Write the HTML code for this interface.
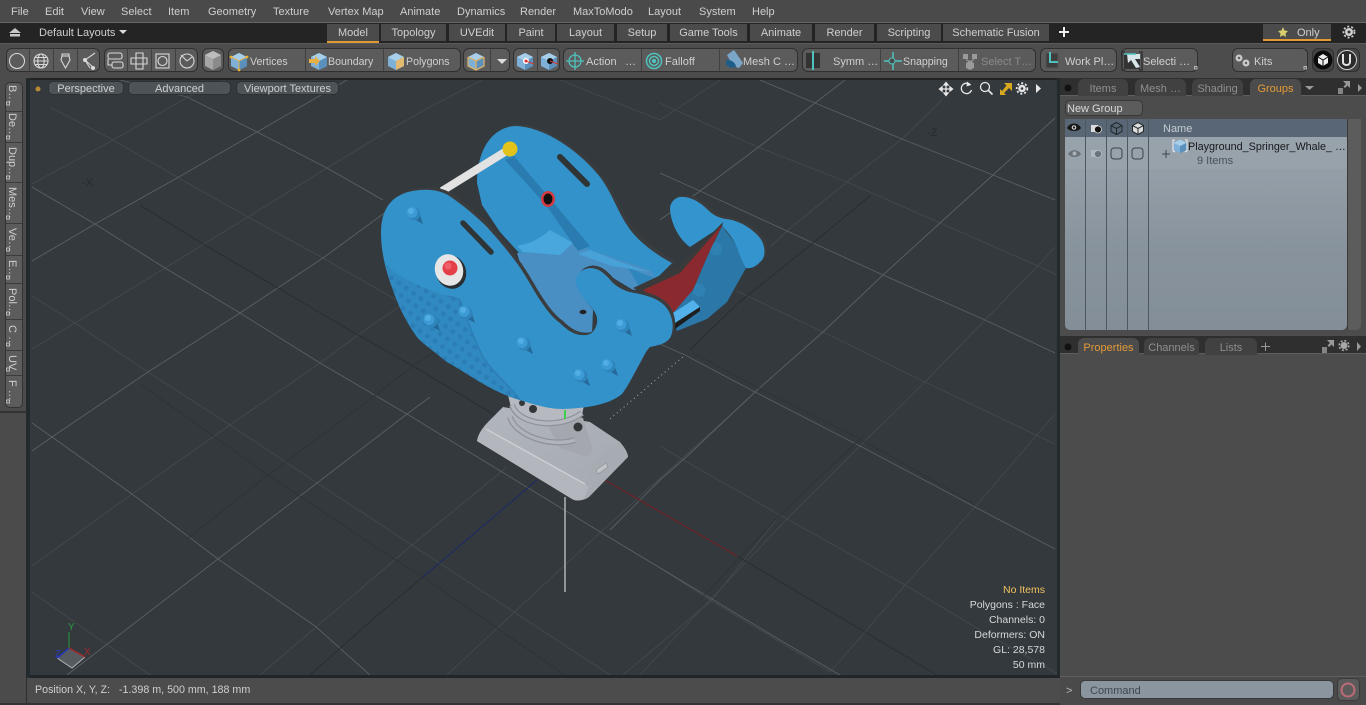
<!DOCTYPE html>
<html><head><meta charset="utf-8"><title>Modo</title>
<style>
html,body{margin:0;padding:0;background:#4a4a4a;}
body{width:1366px;height:705px;overflow:hidden;position:relative;font-family:"Liberation Sans",sans-serif;font-size:11px;color:#cfcfcf;}
.r{position:absolute;box-sizing:border-box;}
.t{position:absolute;white-space:nowrap;line-height:14px;height:14px;margin-top:1px;}
.tab{position:absolute;top:24px;height:17px;background:#4b4b4b;text-align:center;line-height:18px;color:#cfcfcf;}
.grp{position:absolute;top:48px;height:24px;background:#5b5b5b;border:1px solid #303030;border-radius:6px;box-sizing:border-box;}
.v{position:absolute;left:5px;width:14px;writing-mode:vertical-rl;line-height:14px;white-space:nowrap;color:#d0d0d0;}
.vp{position:absolute;height:14px;line-height:14px;background:#4d5356;border:1px solid #2b3033;border-radius:5px;box-sizing:border-box;text-align:center;color:#cdd0d2;top:81px;}
.h{position:absolute;right:321px;line-height:14px;height:14px;white-space:nowrap;color:#d6d9db;font-size:10.5px;margin-top:1px;}
.pt{position:absolute;height:17px;background:#414141;border-radius:6px 6px 0 0;text-align:center;line-height:20px;color:#8f8f8f;}
</style></head><body>

<!-- panels -->
<div class="r" style="left:0;top:0;width:1366px;height:22px;background:#4a4a4a"></div>
<div class="r" style="left:0;top:22px;width:1366px;height:21px;background:#242424;border-top:1px solid #666"></div>
<div class="r" style="left:0;top:43px;width:1366px;height:35px;background:#4c4c4c;border-top:1px solid #5a5a5a"></div>
<div class="r" style="left:0;top:78px;width:1060px;height:2px;background:#222"></div>
<div class="r" style="left:0;top:78px;width:26px;height:627px;background:#4b4b4b"></div>
<div class="r" style="left:26px;top:78px;width:4px;height:600px;background:#232a2d"></div>
<div class="r" style="left:1057px;top:78px;width:3px;height:600px;background:#232a2d"></div>
<div class="r" style="left:30px;top:675px;width:1030px;height:3px;background:#1f2528"></div>
<div class="r" style="left:26px;top:678px;width:1034px;height:25px;background:#4c4c4c;border-left:1px solid #2e2e2e"></div>
<div class="r" style="left:0;top:703px;width:1060px;height:2px;background:#333"></div>

<!-- left tool strip -->
<div class="r" style="left:5px;top:82px;width:18px;height:326px;background:#5c5c5c;border:1px solid #333;border-radius:5px"></div>
<div class="r" style="left:0;top:411px;width:26px;height:2px;background:#333"></div>

<!-- tabs row -->
<div class="tab" style="left:327px;width:52px;border-bottom:2px solid #e09a32;height:17px">Model</div>
<div class="tab" style="left:381px;width:65px">Topology</div>
<div class="tab" style="left:449px;width:56px">UVEdit</div>
<div class="tab" style="left:507px;width:48px">Paint</div>
<div class="tab" style="left:557px;width:57px">Layout</div>
<div class="tab" style="left:617px;width:50px">Setup</div>
<div class="tab" style="left:670px;width:77px">Game Tools</div>
<div class="tab" style="left:750px;width:62px">Animate</div>
<div class="tab" style="left:815px;width:59px">Render</div>
<div class="tab" style="left:877px;width:64px">Scripting</div>
<div class="tab" style="left:943px;width:106px">Schematic Fusion</div>
<div class="tab" style="left:1263px;width:68px;border-bottom:2px solid #e09a32;box-sizing:border-box;text-align:left;padding-left:34px">Only</div>

<!-- toolbar groups -->
<div class="grp" style="left:6px;width:94px"></div>
<div class="grp" style="left:104px;width:94px"></div>
<div class="grp" style="left:202px;width:22px"></div>
<div class="grp" style="left:228px;width:233px"></div>
<div class="grp" style="left:463px;width:47px"></div>
<div class="grp" style="left:513px;width:47px"></div>
<div class="grp" style="left:563px;width:235px"></div>
<div class="grp" style="left:802px;width:234px"></div>
<div class="grp" style="left:1040px;width:77px"></div>
<div class="grp" style="left:1121px;width:77px"></div>
<div class="grp" style="left:1232px;width:76px"></div>
<div class="grp" style="left:1312px;width:22px;background:#444"></div>
<div class="grp" style="left:1337px;width:23px;background:#444"></div>

<!-- right panels -->
<div class="r" style="left:1060px;top:78px;width:306px;height:18px;background:#2f2f2f"></div>
<div class="r" style="left:1060px;top:95px;width:306px;height:241px;background:#4c4c4c;border-top:1px solid #5e5e5e"></div>
<div class="pt" style="left:1078px;top:79px;width:50px;">Items</div>
<div class="pt" style="left:1135px;top:79px;width:51px;">Mesh …</div>
<div class="pt" style="left:1192px;top:79px;width:51px;">Shading</div>
<div class="pt" style="left:1250px;top:79px;width:51px;background:#4c4c4c;color:#e59a35;">Groups</div>
<div class="r" style="left:1065px;top:100px;width:78px;height:16px;background:#5c5c5c;border:1px solid #383838;border-radius:5px"></div>
<div class="r" style="left:1065px;top:119px;width:282px;height:211px;background:linear-gradient(#9ca6ae,#88939d 60%,#838e98);border-radius:0 0 5px 5px"></div>
<div class="r" style="left:1065px;top:119px;width:282px;height:18px;background:#596675"></div>
<div class="r" style="left:1065px;top:137px;width:282px;height:32px;background:#98a2aa"></div>
<div class="r" style="left:1347px;top:119px;width:14px;height:211px;background:#5c5c5c;border-radius:0 0 5px 0;border-left:1px solid #3a3a3a"></div>
<div class="r" style="left:1085px;top:119px;width:1px;height:211px;background:#4e5860"></div>
<div class="r" style="left:1106px;top:119px;width:1px;height:211px;background:#4e5860"></div>
<div class="r" style="left:1127px;top:119px;width:1px;height:211px;background:#4e5860"></div>
<div class="r" style="left:1148px;top:119px;width:1px;height:211px;background:#4e5860"></div>

<div class="r" style="left:1060px;top:336px;width:306px;height:18px;background:#2f2f2f"></div>
<div class="r" style="left:1060px;top:353px;width:306px;height:323px;background:#4c4c4c;border-top:1px solid #5e5e5e"></div>
<div class="pt" style="left:1078px;top:338px;width:61px;background:#4c4c4c;color:#e59a35;">Properties</div>
<div class="pt" style="left:1144px;top:338px;width:55px;">Channels</div>
<div class="pt" style="left:1205px;top:338px;width:52px;">Lists</div>

<div class="r" style="left:1060px;top:676px;width:306px;height:29px;background:#4a4a4a;border-top:1px solid #5e5e5e"></div>
<div class="r" style="left:1080px;top:680px;width:254px;height:19px;background:#8a95a0;border:1px solid #3a3a3a;border-radius:5px"></div>
<div class="r" style="left:1337px;top:678px;width:23px;height:23px;background:#5b5b5b;border:1px solid #3a3a3a;border-radius:5px"></div>

<!-- main art -->
<svg width="1366" height="705" viewBox="0 0 1366 705" style="position:absolute;left:0;top:0" xmlns="http://www.w3.org/2000/svg">
<defs>
<clipPath id="vpc"><rect x="30" y="80" width="1027" height="595"/></clipPath>
<pattern id="belly" width="9" height="9" patternUnits="userSpaceOnUse" patternTransform="rotate(35)">
<rect width="9" height="9" fill="#3189c1"/>
<circle cx="3" cy="3" r="2.400" fill="#2b7eb4"/>
</pattern>
<linearGradient id="baseg" x1="0" y1="0" x2="1" y2="1"><stop offset="0" stop-color="#b2b6bd"/><stop offset="1" stop-color="#a4a8b0"/></linearGradient>
<g id="b">
<path d="M1 6 L10 11 L7 2 Z" fill="#24699a"/>
<circle cx="1" cy="1" r="6.500" fill="#2f85bb"/>
<circle cx="-1" cy="-0.500" r="5.500" fill="#3c9bd5"/>
<circle cx="-2" cy="-2" r="3" fill="#52ade2"/>
</g>
<g id="cube">
<path d="M0 -8 L8 -4 L8 5 L0 9 L-8 5 L-8 -4 Z" fill="#7fb1d8"/>
<path d="M0 0 L8 -4 L8 5 L0 9 Z" fill="#5a90bb"/>
<path d="M0 -8 L8 -4 L0 0 L-8 -4 Z" fill="#a8cfe9"/>
</g>
<g id="cubeo">
<use href="#cube"/>
<path d="M-8 -4 L0 0 L8 -4 M0 0 L0 9" stroke="#e2b04a" stroke-width="1" fill="none"/>
<circle cx="-8" cy="-4" r="1.400" fill="#f0b030"/><circle cx="8" cy="-4" r="1.400" fill="#f0b030"/><circle cx="0" cy="9" r="1.400" fill="#f0b030"/>
</g>
</defs>

<rect x="30" y="80" width="1027" height="595" fill="#33393d"/>
<g clip-path="url(#vpc)" fill="none">
<!-- dim grid -->
<g stroke="#424a4d" stroke-width=".9">
<polyline points="50,107 113,140 177,177 248,217 323,258 400,302"/>
<polyline points="32,296 75,323 148,372 230,425 317,483 412,545 610,675"/>
<polyline points="32,592 150,675"/>
<polyline points="32,184 113,140 188,97 225,80"/>
<polyline points="32,349 75,323 165,268 248,217 327,168 398,125 430,107 520,60"/>
<polyline points="32,566 132,494 230,425 320,363 358,335 430,285"/>
<polyline points="260,675 412,545 507,467"/>
<polyline points="660,103 760,148 847,182 940,223 1038,266 1057,275"/>
<polyline points="737,291 823,332 925,382 1055,444"/>
<polyline points="660,446 685,461 780,515 905,585 980,630 1060,675"/>
<polyline points="660,568 710,600 830,672"/>
<polyline points="660,120 720,80"/>
<polyline points="943,99 902,139 847,182 788,230 770,247"/>
<polyline points="1055,247 1038,266 985,320 925,382 860,446 788,518 710,600 640,675"/>
<polyline points="1055,414 975,507 905,585 865,632 830,672"/>
<polyline points="447,675 565,565 638,498 747,400"/>
<polyline points="623,675 712,600 780,515"/>
<polyline points="560,80 660,120"/>
</g>
<!-- bright grid -->
<g stroke="#596164" stroke-width=".9">
<polyline points="187,97 257,132 327,168 383,200"/>
<polyline points="120,80 187,97"/>
<polyline points="32,187 95,224 165,268 240,313 320,363 407,414 602,533 780,640 840,675"/>
<polyline points="32,423 52,437 132,494 218,559 315,626 370,675"/>
<polyline points="32,261 95,224 177,178 257,132 347,80"/>
<polyline points="32,451 52,437 148,372 240,313 323,258 390,209"/>
<polyline points="67,675 218,559 317,483 407,414 430,397"/>
<polyline points="760,80 815,103 902,139 993,175 1055,200"/>
<polyline points="660,173 700,191 813,243 883,275 985,320 1055,353"/>
<polyline points="660,344 685,355 755,392 860,446 975,507 1055,549"/>
<polyline points="845,80 815,103 760,146 700,191 660,220"/>
<polyline points="1055,118 993,175 940,223 883,275 823,332 755,392 683,460 660,480 610,530"/>
</g>
<!-- dark grid -->
<g stroke="#272d30" stroke-width=".9">
<polyline points="140,205 203,244 278,288 358,335 413,366 600,478"/>
<polyline points="737,556 865,632 937,675"/>
<polyline points="423,577 380,613 310,675"/>
<polyline points="870,196 813,243 737,304 690,350"/>
</g>
<g stroke="#2d3336" stroke-width=".9">
<polyline points="187,539 268,475 373,397 413,366 440,348"/>
<polyline points="140,384 268,475 380,550 423,577 497,628 565,675"/>
<polyline points="693,353 760,389 860,439 973,503"/>
<polyline points="860,439 780,515 700,600"/>
</g>
<!-- axes -->
<polyline points="537,480 423,577" stroke="#1c2a66" stroke-width="1"/>
<polyline points="603,479 737,556" stroke="#6e2226" stroke-width="1.200"/>
<polyline points="610,419 685,355" stroke="#c8ccce" stroke-width=".8" stroke-dasharray="1 3.500"/>
<line x1="565" y1="497" x2="565" y2="592" stroke="#cfd3d5" stroke-width="1.200"/>

<!-- far side lower body -->
<path d="M722 226 L735 243 L746 268 L737 284 L727 302 L707 319 L677 331 L670 313 L693 290 L707 257 Z" fill="#2a77a8"/>
<circle cx="716" cy="249" r="6.500" fill="#2f80b3"/><circle cx="699" cy="290" r="6.500" fill="#2f80b3"/>
<!-- tail lobes -->
<path d="M670 209 C670 203 674 198 680 197 C690 196 700 202 708 210 C714 216 720 218 726 219 C738 220 752 228 760 238 C766 246 766 258 760 262 C756 267 750 269 746 268 C742 262 739 252 735 243 C731 236 726 230 722 226 L690 247 C680 240 671 225 670 209 Z" fill="#3a3c3e" transform="translate(2.500,-2)"/>
<path d="M670 209 C670 203 674 198 680 197 C690 196 700 202 708 210 C714 216 720 218 726 219 C738 220 752 228 760 238 C766 246 766 258 760 262 C756 267 750 269 746 268 C742 262 739 252 735 243 C731 236 726 230 722 226 L690 247 C680 240 671 225 670 209 Z" fill="#3494cd"/>

<!-- back plate -->
<path d="M479 183 C480 150 495 124 519 124 C548 126 582 150 604 178 C615 195 622 212 631 224 C640 238 660 252 676 262 L650 282 L520 252 L482 205 Z" fill="#3a3d3f"/>
<path d="M477 183 C477 150 492 126 517 126 C547 128 580 152 600 177 C612 193 618 212 627 225 C636 240 655 254 672 263 L653 282 L640 285 L600 262 L520 254 L500 232 L482 205 Z" fill="#3392c9"/>
<!-- seat -->
<path d="M517 253 L560 250 L573 243 L590 250 L650 270 L660 285 L633 290 L600 270 L576 282 L580 293 L593 310 L592 335 L580 335 L560 323 L540 300 L523 273 Z" fill="#4a8fc3"/>
<path d="M517 246 C525 244 535 243 550 230 L573 243 L560 255 L523 252 Z" fill="#4aa7de"/>
<path d="M578 254 L590 250 L620 262 L650 272 L612 266 Z" fill="#48a2d8"/>
<path d="M628 268 L665 282 L640 288 Z" fill="#2e86bd"/>
<!-- shadow stripe and slot -->
<path d="M514 156 L590 246 L578 251 L546 205 L505 160 Z" fill="#2a7cb0"/>
<line x1="560" y1="157" x2="587" y2="184" stroke="#2f3437" stroke-width="6" stroke-linecap="round"/>
<ellipse cx="548" cy="199" rx="7" ry="8" fill="#d43a40"/>
<ellipse cx="548" cy="199" rx="4.500" ry="5.500" fill="#111"/>
<!-- rod -->
<line x1="442" y1="191" x2="508" y2="150" stroke="#e2e2e2" stroke-width="8"/>
<circle cx="510" cy="149" r="7.500" fill="#e3c219"/>
<!-- mouth -->
<path d="M723 222 L680 266 L633 288 L643 292 L680 273 L722 227 Z" fill="#3a3a3a"/>
<path d="M722 225 L707 257 L693 290 L673 313 L643 290 L680 273 Z" fill="#8a2a2e"/>
<path d="M673 313 L693 300 L700 307 L675 323 Z" fill="#52b0ea"/>
<path d="M675 323 L700 307 L700 311 L675 329 Z" fill="#1e1e1e"/>

<!-- base -->
<path d="M477 441 C478 434 482 428 490 420 L503 407 L590 422 L620 442 C625 448 628 453 628 457 L590 496 C586 500 578 502 572 499 Z" fill="url(#baseg)"/>
<path d="M477 441 C478 436 481 431 485 428 L588 486 C588 490 586 495 583 499 C579 501 575 501 572 499 Z" fill="#b3b7bd"/>
<path d="M486 429 L585 484" stroke="#cbced3" stroke-width="1.500"/>
<path d="M586 486 L628 457 C625 452 622 446 620 442 L596 458 C592 466 590 476 586 486 Z" fill="#a7abb2"/>
<path d="M596 470 L606 463 L608 467 L598 474 Z" fill="#c0c4c9" stroke="#8d9198" stroke-width=".7"/>
<path d="M550 430 L560 448 L587 457 L593 450 L583 418 L540 405 Z" fill="#a4a8ae"/>
<path d="M508 395 L512 412 L548 425 L582 415 L586 395 Z" fill="#b6bac0"/>
<path d="M510 417 C515 435 550 448 575 440" stroke="#8e9299" stroke-width="6"/>
<path d="M510 417 C515 435 550 448 575 440" stroke="#b0b4ba" stroke-width="3.500"/>
<path d="M512 405 C518 425 560 430 582 413" stroke="#8e9299" stroke-width="6"/>
<path d="M512 405 C518 425 560 430 582 413" stroke="#b4b8be" stroke-width="3.500"/>
<circle cx="533" cy="409" r="4" fill="#33373a"/><circle cx="578" cy="427" r="4.500" fill="#33373a"/><circle cx="522" cy="403" r="3" fill="#33373a"/>
<line x1="565" y1="410" x2="565" y2="419" stroke="#3ecf4a" stroke-width="2"/>

<!-- front plate -->
<path d="M381 233 C381 205 395 192 420 190 C432 189 440 191 448 195 C463 205 477 217 487 227 C497 238 507 250 513 258 C525 273 532 288 540 300 C548 312 554 319 560 323 C568 331 575 335 582 335 C590 336 595 332 597 323 C598 316 595 312 591 307 C584 298 577 292 576 282 C576 273 582 269 590 268 C600 268 606 275 613 283 C620 289 627 292 635 293 C650 296 662 300 668 310 C673 318 674 328 671 336 C668 343 660 345 650 347 C645 352 643 358 640 363 C634 374 628 386 622 394 C610 404 590 408 563 409 C545 409 527 402 510 397 C498 391 487 386 480 382 C467 374 456 367 447 362 C430 348 423 344 417 337 C405 320 398 305 393 290 C386 272 381 252 381 233 Z" fill="#3a3c3e" transform="translate(2.500,-2.500)"/>
<path d="M381 233 C381 205 395 192 420 190 C432 189 440 191 448 195 C463 205 477 217 487 227 C497 238 507 250 513 258 C525 273 532 288 540 300 C548 312 554 319 560 323 C568 331 575 335 582 335 C590 336 595 332 597 323 C598 316 595 312 591 307 C584 298 577 292 576 282 C576 273 582 269 590 268 C600 268 606 275 613 283 C620 289 627 292 635 293 C650 296 662 300 668 310 C673 318 674 328 671 336 C668 343 660 345 650 347 C645 352 643 358 640 363 C634 374 628 386 622 394 C610 404 590 408 563 409 C545 409 527 402 510 397 C498 391 487 386 480 382 C467 374 456 367 447 362 C430 348 423 344 417 337 C405 320 398 305 393 290 C386 272 381 252 381 233 Z" fill="#3392c9"/>
<!-- belly -->
<path d="M386 264 C400 280 425 288 447 296 C452 297 458 298 460 300 C466 315 472 335 483 357 C495 375 512 388 520 400 C505 396 490 388 480 382 C467 374 456 367 447 362 C430 348 423 344 417 337 C405 320 398 305 393 290 C390 282 387 272 386 264 Z" fill="url(#belly)"/>
<path d="M447 296 C452 297 458 298 460 300 C466 315 472 335 483 357 C495 375 512 388 520 400" stroke="#2c7fb5" stroke-width="1.500" fill="none"/>
<ellipse cx="583" cy="312" rx="3.500" ry="2.200" fill="#222"/>
<line x1="463" y1="223" x2="491" y2="252" stroke="#2f3437" stroke-width="5.500" stroke-linecap="round"/>
<ellipse cx="451" cy="272" rx="15" ry="17" fill="#2b2e30" transform="rotate(-20 451 272)"/>
<ellipse cx="449" cy="270" rx="14" ry="16" fill="#e6e6e6" transform="rotate(-20 449 270)"/>
<circle cx="450" cy="268" r="7.500" fill="#e53f4a"/><circle cx="448" cy="266" r="3.500" fill="#f0606a"/>
<use href="#b" x="413" y="213"/><use href="#b" x="465" y="312"/><use href="#b" x="430" y="320"/><use href="#b" x="523" y="343"/><use href="#b" x="622" y="325"/><use href="#b" x="608" y="365"/><use href="#b" x="580" y="375"/>

<!-- gizmo -->
<path d="M69 648 L85 657 L72 668 L57 658 Z" fill="#555b60"/>
<path d="M57 658 L72 668 L85 657" stroke="#b0b4b6" stroke-width="1"/>
<line x1="69" y1="648" x2="69" y2="632" stroke="#2b8a3a" stroke-width="1.200"/>
<line x1="69" y1="648" x2="85" y2="657" stroke="#a02a2c" stroke-width="1.500"/>
<line x1="69" y1="648" x2="57" y2="658" stroke="#2438b0" stroke-width="1.500"/>
</g>

<!-- toolbar separators -->
<g stroke="#404040" stroke-width="1">
<path d="M29.500 49V71M53.500 49V71M77.500 49V71M127.500 49V71M151.500 49V71M175.500 49V71M305.500 49V71M383.500 49V71M490.500 49V71M537.500 49V71M641.500 49V71M719.500 49V71M880.500 49V71M958.500 49V71"/>
</g>
<!-- toolbar icons -->
<g fill="none" stroke="#d8d8d8" stroke-width="1.100">
<circle cx="17" cy="61" r="7.500"/>
<circle cx="41" cy="61" r="7"/><ellipse cx="41" cy="61" rx="3.200" ry="7"/><path d="M34 61H48M35 57.500H47M35 64.500H47"/>
<path d="M62 54H69V56L70 60L65.500 68L61 60L62 56Z"/><path d="M62 56H69"/>
<path d="M95 53L85 60L90 68M85 60L94 68" /><circle cx="85" cy="60" r="1.500" fill="#ddd"/><circle cx="93" cy="68" r="1.500" fill="#ddd"/>
<rect x="108" y="53" width="14" height="6" rx="2"/><rect x="112" y="62" width="11" height="6" rx="2"/><path d="M108 59V65H112"/>
<path d="M136 53H143V58H147V64H143V69H136V64H131V58H136Z"/><path d="M136 58H143V64H136Z"/>
<rect x="156" y="54" width="13" height="14"/><circle cx="162.500" cy="61" r="4.500"/>
<circle cx="187" cy="61" r="7"/><path d="M187 61L181 55M187 61L192 57"/>
</g>
<path d="M205 55L213 51L221 55V66L213 70L205 66Z" fill="#a5a5a5"/><path d="M213 59L221 55V66L213 70Z" fill="#8a8a8a"/><path d="M205 55L213 51L221 55L213 59Z" fill="#bdbdbd"/>
<use href="#cubeo" x="239" y="61"/>
<use href="#cube" x="319" y="61"/><path d="M309 59H315V56L320 61L315 66V63H309Z" fill="#e8b040"/>
<use href="#cube" x="396" y="61"/><path d="M396 61L404 57V66L396 70Z" fill="#e3bb70"/>
<use href="#cube" x="476" y="61"/><path d="M468 57L476 61L484 57M476 61V70M468 57V66L476 70L484 66V57" stroke="#d9b168" fill="none" stroke-width="1.300"/>
<path d="M497 59H507L502 64Z" fill="#dcdcdc"/>
<use href="#cube" x="525" y="61"/><circle cx="526" cy="61" r="3" fill="#fff"/><circle cx="526" cy="61" r="1.500" fill="#d33"/><path d="M526 61L534 64" stroke="#d33"/>
<use href="#cube" x="549" y="61"/><circle cx="550" cy="61" r="3" fill="#111"/><path d="M550 61L558 64" stroke="#d33"/>
<g stroke="#4fc2bd" fill="none" stroke-width="1.300">
<circle cx="575" cy="61" r="6"/><path d="M575 52V70M566 61H584"/>
<circle cx="654" cy="61" r="7.500" stroke-width="1.500"/><circle cx="654" cy="61" r="4.500" stroke-width="1.500"/><circle cx="654" cy="61" r="1.500" fill="#4fc2bd"/>
<path d="M893 52V70M884 61H902" stroke-width="1.500"/>
</g>
<circle cx="892" cy="61" r="3" fill="#4a4a4a" stroke="#4fc2bd"/>
<path d="M727 55L734 50L743 63L739 68L733 66Z" fill="#7aa6c8"/><path d="M726 60C731 59 736 63 736 67L731 68L726 65Z" fill="#1e5f8a"/>
<rect x="806" y="53" width="6" height="15" fill="#333"/><rect x="814" y="53" width="6" height="15" fill="#333"/><rect x="812" y="51" width="2" height="19" fill="#4fc2bd"/>
<g fill="#9a9a9a"><path d="M963 54h5v5h-5zM972 54h5v5h-5z"/><path d="M966 60l4 3 4-3v-1l-4 2-4-2z"/><path d="M966 63l4 -2 4 2v5l-4 2-4-2z"/></g>
<g><rect x="1046" y="53" width="12" height="15" fill="#3d3d3d" stroke="#555"/><path d="M1050 52V62H1058" stroke="#4fc2bd" stroke-width="2" fill="none"/></g>
<g><path d="M1125 52H1122V70H1125M1139 52H1142V70H1139" stroke="#333" fill="none" stroke-width="1.500"/><rect x="1124" y="54" width="16" height="15" fill="#333"/><path d="M1127 54H1140V59H1135L1140 67L1136 68L1131 60L1128 63Z" fill="#d8e6ea"/><path d="M1124 54H1136" stroke="#4fc2bd" stroke-width="1.500"/></g>
<g fill="#c8c8c8"><circle cx="1239" cy="58" r="3.500"/><circle cx="1246" cy="63" r="3.500"/><circle cx="1239" cy="58" r="1.200" fill="#5b5b5b"/><circle cx="1246" cy="63" r="1.200" fill="#5b5b5b"/></g>
<circle cx="1323" cy="60" r="9.500" fill="#0b0b0b"/><path d="M1323 54L1328 57V63L1323 66L1318 63V57Z" fill="#eee"/><path d="M1318 57L1323 60L1328 57M1323 60V66" stroke="#0b0b0b" fill="none"/>
<circle cx="1347" cy="60" r="9.500" fill="#2a2a2a" stroke="#cfcfcf"/><path d="M1343 54V62C1343 66 1350 66 1350 62V54" stroke="#e4e4e4" stroke-width="2" fill="none"/>
<g fill="none" stroke="#cfcfcf" stroke-width=".8"><rect x="1194.500" y="66.500" width="2.500" height="2.500"/><rect x="1304" y="66.500" width="2.500" height="2.500"/></g>

<!-- tab row icons -->
<path d="M9 33L15 28L21 33Z" fill="#c8c8c8"/><rect x="10" y="34" width="10" height="2.500" fill="#c8c8c8"/>
<path d="M119 30H127L123 34Z" fill="#dcdcdc"/>
<path d="M1064 27V37M1059 32H1069" stroke="#eee" stroke-width="2"/>
<path d="M1283 27L1284.500 30.500L1288 31L1285.500 33.500L1286 37L1283 35.200L1280 37L1280.500 33.500L1278 31L1281.500 30.500Z" fill="#d8cf6c"/>
<g><circle cx="1349" cy="32" r="4" fill="#d0d0d0"/><circle cx="1349" cy="32" r="5.500" fill="none" stroke="#d0d0d0" stroke-width="1.800" stroke-dasharray="2 2"/><circle cx="1349" cy="32" r="1.500" fill="#333"/></g>

<!-- left strip segments -->
<g stroke="#3b3b3b"><path d="M6 111.500H22M6 142.500H22M6 182.500H22M6 223.500H22M6 255.500H22M6 283.500H22M6 319.500H22M6 350.500H22M6 375.500H22"/></g>
<g fill="none" stroke="#cfcfcf" stroke-width=".8"><rect x="6.500" y="102" width="3" height="3"/><rect x="6.500" y="136" width="3" height="3"/><rect x="6.500" y="176" width="3" height="3"/><rect x="6.500" y="216" width="3" height="3"/><rect x="6.500" y="248" width="3" height="3"/><rect x="6.500" y="276" width="3" height="3"/><rect x="6.500" y="312" width="3" height="3"/><rect x="6.500" y="343" width="3" height="3"/><rect x="6.500" y="368" width="3" height="3"/><rect x="6.500" y="400" width="3" height="3"/></g>

<!-- viewport icons -->
<circle cx="38" cy="89" r="2.500" fill="#b98a34"/>
<g stroke="#e8e8e8" fill="none" stroke-width="1.300">
<path d="M946 83V95M940 89H952"/><path d="M944 85L946 82.500L948 85ZM944 93L946 95.500L948 93ZM942 87L939.500 89L942 91ZM950 87L952.500 89L950 91Z" fill="#e8e8e8"/>
<path d="M970.500 85A5.200 5.200 0 1 0 971.500 90"/><path d="M967 81.500L971 85L966.500 86.500Z" fill="#e8e8e8" stroke="none"/>
<circle cx="985" cy="87" r="4.500"/><path d="M988.500 90.500L992.500 94.500" stroke-width="1.600"/>
</g>
<path d="M1000 89V95H1006L1004 93L1009 88L1012 91V83H1004L1006.500 85.500L1002 91Z" fill="#d8a820"/>
<g><circle cx="1022" cy="88.500" r="3.800" fill="#e4e4e4"/><circle cx="1022" cy="88.500" r="5.300" fill="none" stroke="#e4e4e4" stroke-width="1.800" stroke-dasharray="2 2"/><circle cx="1022" cy="88.500" r="1.300" fill="#33393d"/></g>
<path d="M1036 84L1041 88.500L1036 93Z" fill="#e8e8e8"/>

<!-- right panel icons -->
<circle cx="1068" cy="88" r="3.500" fill="#111"/><circle cx="1068" cy="347" r="3.500" fill="#111"/>
<path d="M1305 86H1314L1309.500 90Z" fill="#9a9a9a"/>
<g fill="#9a9a9a">
<path d="M1343 81H1350V88L1347.500 85.500L1345 88L1343.500 86.500L1346 84Z"/><rect x="1338" y="88" width="5" height="6" fill="#858585"/>
<path d="M1358 84L1362 88L1358 92Z"/>
<path d="M1327 340H1334V347L1331.500 344.500L1329 347L1327.500 345.500L1330 343Z"/><rect x="1322" y="347" width="5" height="6" fill="#858585"/>
<path d="M1357 342L1361 346.500L1357 351Z"/>
</g>
<g><circle cx="1344" cy="345.500" r="3.500" fill="#a8a8a8"/><circle cx="1344" cy="345.500" r="4.800" fill="none" stroke="#a8a8a8" stroke-width="1.600" stroke-dasharray="2 1.800"/></g>
<path d="M1265.500 342.500V351M1261 346.500H1270" stroke="#9a9a9a" stroke-width="1"/>
<!-- table icons -->
<g>
<path d="M1067 128C1070 122 1078 122 1081 128C1078 132 1070 132 1067 128Z" fill="#161616"/><circle cx="1074" cy="127.500" r="2.300" fill="#d0d0d0"/><circle cx="1074" cy="127.500" r="1.100" fill="#111"/>
<path d="M1068 154C1071 149 1078 149 1081 154C1078 158 1071 158 1068 154Z" fill="#6a7379"/><circle cx="1074.500" cy="153.500" r="2" fill="#aab2b8"/>
<rect x="1091" y="125" width="7" height="7" fill="#ddd"/><circle cx="1098" cy="129.500" r="3.500" fill="#111" stroke="#ddd" stroke-width=".8"/>
<rect x="1091" y="150" width="7" height="7" fill="#b0b7bd"/><circle cx="1098" cy="154" r="3.500" fill="#6a7379" stroke="#b6bcc2" stroke-width=".8"/>
<path d="M1116.500 122.500L1122 125.500V131.500L1116.500 134.500L1111 131.500V125.500ZM1111 125.500L1116.500 128.500L1122 125.500M1116.500 128.500V134.500" stroke="#22282c" fill="none"/>
<path d="M1138 122.500L1143.500 125.500V131.500L1138 134.500L1132.500 131.500V125.500Z" fill="#ddd" stroke="#22282c"/><path d="M1132.500 125.500L1138 128.500L1143.500 125.500M1138 128.500V134.500" stroke="#22282c" fill="none"/>
<rect x="1111" y="148" width="11" height="11" rx="3" fill="none" stroke="#3b444b"/>
<rect x="1132" y="148" width="11" height="11" rx="3" fill="none" stroke="#3b444b"/>
<path d="M1166 150V158M1162 154H1170" stroke="#3c454c"/>
<use href="#cube" x="1180" y="146" transform="translate(236 29.200) scale(.8)"/>
<path d="M1175 140H1173V151L1175 152M1185 140H1187V151L1185 152" stroke="#f0f3f5" fill="none"/>
</g>
<circle cx="1348" cy="690" r="6.500" fill="none" stroke="#bd6b78" stroke-width="2"/>
</svg>

<!-- menu text -->
<div class="t" style="left:11px;top:4px">File</div>
<div class="t" style="left:45px;top:4px">Edit</div>
<div class="t" style="left:81px;top:4px">View</div>
<div class="t" style="left:121px;top:4px">Select</div>
<div class="t" style="left:168px;top:4px">Item</div>
<div class="t" style="left:208px;top:4px">Geometry</div>
<div class="t" style="left:273px;top:4px">Texture</div>
<div class="t" style="left:328px;top:4px">Vertex Map</div>
<div class="t" style="left:400px;top:4px">Animate</div>
<div class="t" style="left:457px;top:4px">Dynamics</div>
<div class="t" style="left:520px;top:4px">Render</div>
<div class="t" style="left:573px;top:4px">MaxToModo</div>
<div class="t" style="left:648px;top:4px">Layout</div>
<div class="t" style="left:699px;top:4px">System</div>
<div class="t" style="left:752px;top:4px">Help</div>
<div class="t" style="left:39px;top:25px">Default Layouts</div>

<!-- toolbar text -->
<div class="t" style="left:250px;top:54px;color:#d0d0d0;font-size:10.600px">Vertices</div>
<div class="t" style="left:328px;top:54px;color:#d0d0d0;font-size:10.600px">Boundary</div>
<div class="t" style="left:406px;top:54px;color:#d0d0d0;font-size:10.600px">Polygons</div>
<div class="t" style="left:586px;top:54px;color:#d0d0d0">Action</div>
<div class="t" style="left:625px;top:54px;color:#d0d0d0">…</div>
<div class="t" style="left:665px;top:54px;color:#d0d0d0">Falloff</div>
<div class="t" style="left:743px;top:54px;color:#d0d0d0">Mesh C …</div>
<div class="t" style="left:833px;top:54px;color:#d0d0d0">Symm …</div>
<div class="t" style="left:903px;top:54px;color:#d0d0d0;font-size:10.600px">Snapping</div>
<div class="t" style="left:981px;top:54px;color:#8a8a8a">Select T…</div>
<div class="t" style="left:1065px;top:54px;color:#d0d0d0">Work Pl…</div>
<div class="t" style="left:1143px;top:54px;color:#d0d0d0">Selecti …</div>
<div class="t" style="left:1254px;top:54px;color:#d0d0d0">Kits</div>

<!-- vertical strip text -->
<div class="v" style="top:85px">B…</div>
<div class="v" style="top:113px">De…</div>
<div class="v" style="top:147px">Dup…</div>
<div class="v" style="top:187px">Mes…</div>
<div class="v" style="top:228px">Ve…</div>
<div class="v" style="top:260px">E…</div>
<div class="v" style="top:288px">Pol…</div>
<div class="v" style="top:325px">C …</div>
<div class="v" style="top:355px">UV</div>
<div class="v" style="top:380px">F …</div>

<!-- viewport labels -->
<div class="vp" style="left:48px;width:76px">Perspective</div>
<div class="vp" style="left:128px;width:103px">Advanced</div>
<div class="vp" style="left:236px;width:103px">Viewport Textures</div>
<div class="t" style="left:82px;top:175px;color:#262b2e">-X</div>
<div class="t" style="left:927px;top:125px;color:#262b2e">-Z</div>
<div class="t" style="left:68px;top:620px;color:#2f9a40;font-size:10px">Y</div>
<div class="t" style="left:84px;top:645px;color:#a02a2c;font-size:10px">X</div>
<div class="t" style="left:55px;top:647px;color:#2a3cc0;font-size:10px">Z</div>

<div class="h" style="top:582px;color:#f2c25f">No Items</div>
<div class="h" style="top:597px">Polygons : Face</div>
<div class="h" style="top:612px">Channels: 0</div>
<div class="h" style="top:627px">Deformers: ON</div>
<div class="h" style="top:642px">GL: 28,578</div>
<div class="h" style="top:657px">50 mm</div>

<div class="t" style="left:35px;top:682px;font-size:10.700px">Position X, Y, Z:&nbsp;&nbsp; -1.398 m, 500 mm, 188 mm</div>

<!-- right panel text -->
<div class="t" style="left:1067px;top:101px;color:#d8d8d8">New Group</div>
<div class="t" style="left:1163px;top:121px;color:#c4ccd3">Name</div>
<div class="t" style="left:1188px;top:139px;color:#16191c;font-size:10.800px">Playground_Springer_Whale_ …</div>
<div class="t" style="left:1197px;top:153px;color:#49525a">9 Items</div>
<div class="t" style="left:1090px;top:683px;color:#3f464d">Command</div>
<div class="t" style="left:1066px;top:683px;color:#b8b8b8">&gt;</div>
</body></html>
